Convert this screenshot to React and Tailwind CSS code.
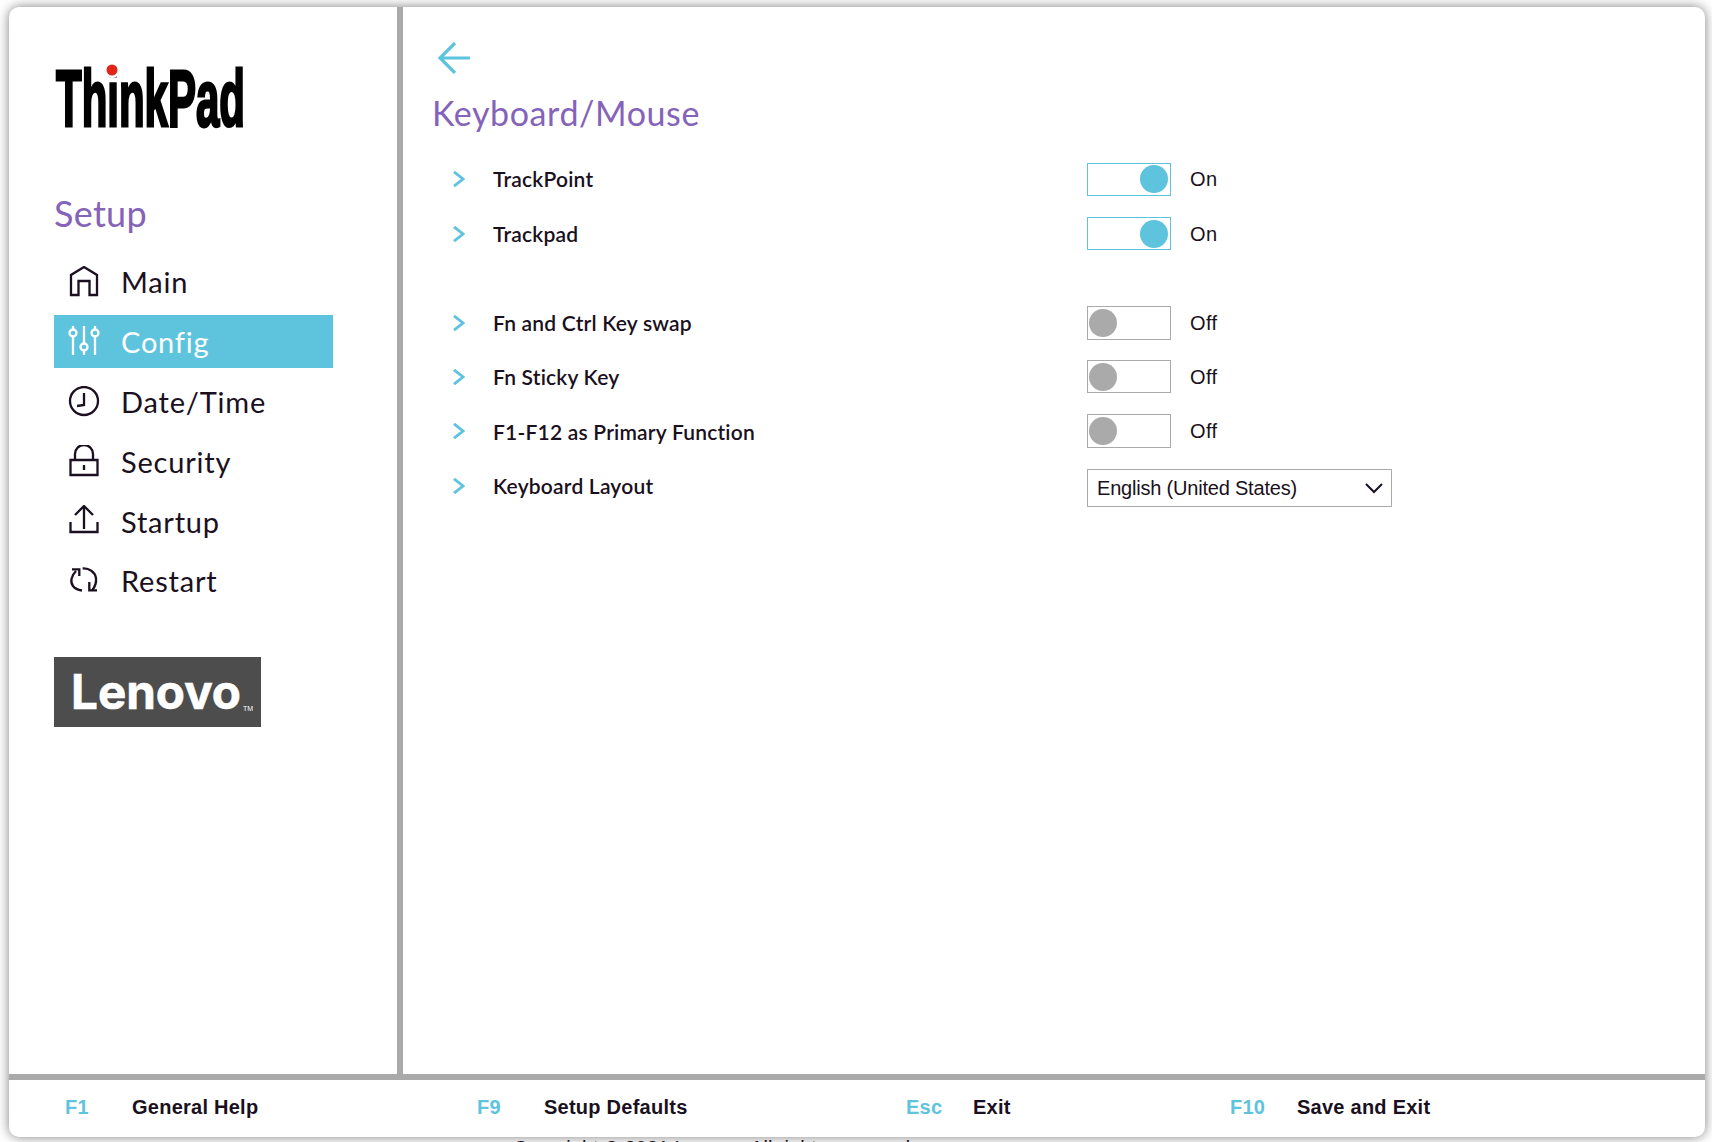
const navItems = [
  { label: "Main", icon: "home" },
  { label: "Config", icon: "sliders", active: true },
  { label: "Date/Time", icon: "clock" },
  { label: "Security", icon: "lock" },
  { label: "Startup", icon: "upload" },
  { label: "Restart", icon: "restart" },
];

const footerKeys = [
  { key: "F1", label: "General Help", width: "w-[412px]" },
  { key: "F9", label: "Setup Defaults", width: "w-[429px]" },
  { key: "Esc", label: "Exit", width: "w-[324px]" },
  { key: "F10", label: "Save and Exit", width: "w-[300px]" },
];

const NavIcon = ({ name }) => {
  const paths = {
    home: <path d="M3 29V9L16 1l13 8v20h-7.5V15h-11v14z" />,
    sliders: (
      <>
        <path d="M5 0v3.5M5 10.5V29M16 0v17.5M16 24.5V29M27 0v3.5M27 10.5V29" />
        <circle cx="5" cy="7" r="3.5" />
        <circle cx="16" cy="21" r="3.5" />
        <circle cx="27" cy="7" r="3.5" />
      </>
    ),
    clock: (
      <>
        <circle cx="16" cy="15" r="14" />
        <path d="M16 7v12l-7 1" />
      </>
    ),
    lock: (
      <>
        <path d="M2.5 15h27v15h-27z" />
        <path d="M7 15V9a9 9 0 0 1 18 0v6M16 20v5" />
      </>
    ),
    upload: (
      <>
        <path d="M2.5 17v10h27V17" />
        <path d="M16 24V1.5M7 10l9-9 9 9" />
      </>
    ),
    restart: (
      <>
        <path d="M4 4.3h7.3V11" />
        <path d="M8 6C3 11 2 17 5 21c2 3 5 4 9 4.5" />
        <path d="M14.7 3.5C21 3 27 7 28 13c.5 5-1 9-4 12.5" />
        <path d="M21.3 17v8.3H29" />
      </>
    ),
  };
  return (
    <svg viewBox="0 0 32 32" className="w-8 h-8" fill="none" stroke="currentColor" strokeWidth="2.3">
      {paths[name]}
    </svg>
  );
};

const Toggle = ({ on, tall }) => (
  <div
    className={`flex items-center w-[84px] border ${tall ? "h-[34px]" : "h-[33px]"} ${
      on ? "justify-end pr-[2px] border-[#5ec4dd]" : "justify-start pl-[1px] border-[#aaaaaa]"
    }`}
  >
    <div className={`w-7 h-7 rounded-full ${on ? "bg-[#5ec4dd]" : "bg-[#aaaaaa]"}`} />
  </div>
);

const Chevron = () => (
  <svg viewBox="0 0 12 16" className="w-3 h-4" fill="none" stroke="#5ec4dd" strokeWidth="2.8">
    <path d="M1 .8l9 7.2-9 7.2" />
  </svg>
);

const Row = ({ label, children }) => (
  <div className="flex items-center h-[54.4px]">
    <div className="ml-5 mr-[28px] flex items-center">
      <Chevron />
    </div>
    <div className="w-[594px] font-['Lato',sans-serif] font-semibold text-[21px] tracking-[0.2px] text-[#1a1020]">
      {label}
    </div>
    {children}
  </div>
);

const ToggleRow = ({ label, on, tall }) => (
  <Row label={label}>
    <Toggle on={on} tall={tall} />
    <span className="ml-[19px] text-[20px] tracking-[0.4px] text-[#1a1020] font-['Liberation_Sans',sans-serif]">
      {on ? "On" : "Off"}
    </span>
  </Row>
);

const App = () => {
  return (
    <div className="h-[1142px] overflow-hidden bg-white pt-[7px] pl-[9px] pr-[7px] font-['Lato',sans-serif]">
      <div className="h-[1130px] flex flex-col bg-white rounded-[10px] shadow-[0_0_12px_rgba(0,0,0,0.5)]">
        <div className="flex flex-1">
          <aside className="w-[394px] border-r-[6px] border-[#aaaaaa] pl-[45px]">
            <svg viewBox="0 0 200 72" className="w-[200px] h-[72px] mt-[55px]">
              <text
                x="2"
                y="64"
                textLength="189"
                lengthAdjust="spacingAndGlyphs"
                stroke="#000000"
                strokeWidth="3"
                fontFamily="'Liberation Sans', sans-serif"
                fontWeight="700"
                fontSize="80"
              >
                ThinkPad
              </text>
              <circle cx="58" cy="8" r="8" fill="#ffffff" />
              <circle cx="58" cy="8" r="5.5" fill="#e1251b" />
            </svg>
            <h2 className="mt-[59px] text-[36px] leading-[40px] tracking-[0.3px] text-[#8463b8]">Setup</h2>
            <nav className="mt-[22.6px] flex flex-col gap-[6.8px] w-[279px]">
              {navItems.map((item) => (
                <div
                  key={item.label}
                  className={`flex items-center h-[53px] text-[29px] tracking-[0.8px] ${
                    item.active ? "bg-[#5ec4dd] text-white" : "text-[#1a1020]"
                  }`}
                >
                  <div className="w-[60px] flex justify-center">
                    <NavIcon name={item.icon} />
                  </div>
                  <span className="ml-[7px]">{item.label}</span>
                </div>
              ))}
            </nav>
            <div className="mt-[49.4px] w-[207px] h-[70px] bg-[#4d4d4d]">
              <svg viewBox="0 0 207 70" className="w-full h-full">
                <text
                  x="17"
                  y="52"
                  textLength="170"
                  lengthAdjust="spacingAndGlyphs"
                  fill="#ffffff"
                  stroke="#ffffff"
                  strokeWidth="0.6"
                  fontFamily="Inter, sans-serif"
                  fontWeight="700"
                  fontSize="48"
                >
                  Lenovo
                </text>
                <text x="189" y="54" fill="#ffffff" fontFamily="'Liberation Sans', sans-serif" fontSize="7">
                  TM
                </text>
              </svg>
            </div>
          </aside>

          <main className="flex-1 pl-[30px] pt-[35px]">
            <svg viewBox="0 0 34 32" className="w-[34px] h-8 ml-1" fill="none" stroke="#5ec4dd" strokeWidth="3.2">
              <path d="M33 16H3M18 1L3 16l15 15" />
            </svg>
            <h1 className="mt-5 mb-5 -ml-px text-[34px] leading-[38px] tracking-[0.6px] text-[#8463b8]">
              Keyboard/Mouse
            </h1>
            <ToggleRow label="TrackPoint" on />
            <ToggleRow label="Trackpad" on />
            <div className="h-[34.6px]" />
            <ToggleRow label="Fn and Ctrl Key swap" tall />
            <ToggleRow label="Fn Sticky Key" />
            <ToggleRow label="F1-F12 as Primary Function" tall />
            <Row label="Keyboard Layout">
              <div className="mt-1 flex items-center justify-between w-[305px] h-[38px] border border-[#aaaaaa] pl-[9px] pr-[8px] text-[20px] tracking-[-0.2px] text-[#1a1020] font-['Liberation_Sans',sans-serif]">
                <span>English (United States)</span>
                <svg viewBox="0 0 18 12" className="w-[18px] h-3" fill="none" stroke="#1a1020" strokeWidth="2">
                  <path d="M1 2l8 8 8-8" />
                </svg>
              </div>
            </Row>
          </main>
        </div>

        <footer className="h-[63px] border-t-[6px] border-[#aaaaaa] flex items-center pb-1 pl-[56px] font-['Liberation_Sans',sans-serif] font-bold text-[20px] tracking-[0.25px]">
          {footerKeys.map((item) => (
            <div key={item.key} className={`flex ${item.width}`}>
              <span className="w-[67px] text-[#5ec4dd]">{item.key}</span>
              <span className="text-[#1a1020]">{item.label}</span>
            </div>
          ))}
        </footer>
      </div>
      <p className="-mt-[4px] ml-[504px] text-[20px] text-[#1a1020] font-['Liberation_Sans',sans-serif]">
        Copyright © 2021 Lenovo. All rights reserved.
      </p>
    </div>
  );
};

export default App;
